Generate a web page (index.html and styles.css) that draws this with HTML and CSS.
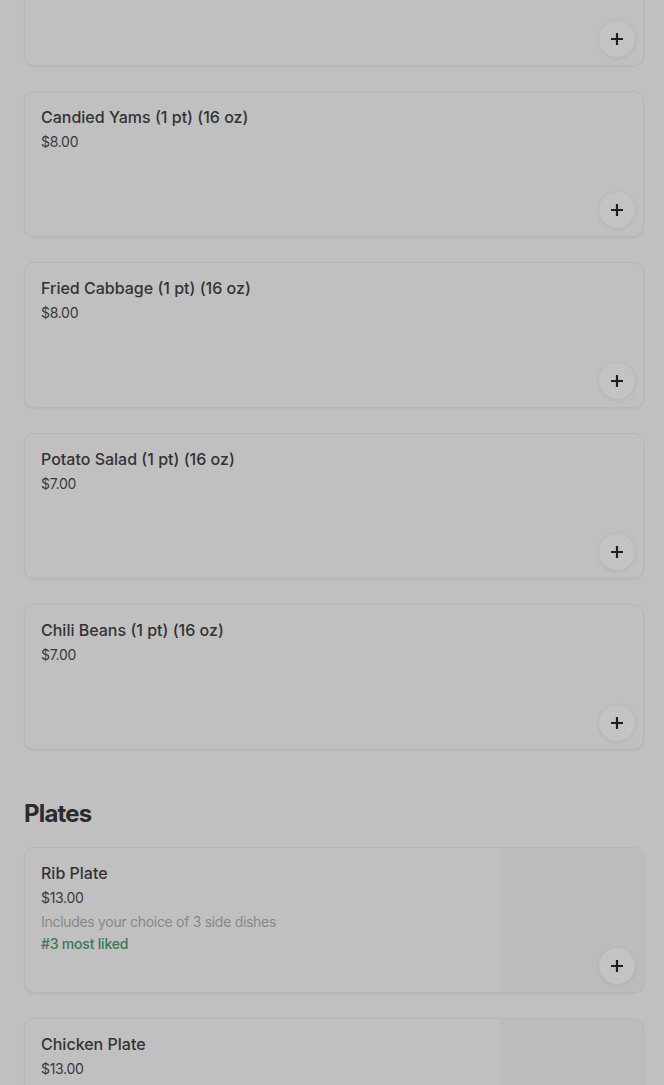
FILE: index.html
```html
<!DOCTYPE html>
<html>
<head>
<meta charset="utf-8">
<link rel="stylesheet" href="styles.css">
</head>
<body>
<div class="page">
  <div class="list list-first">
    <div class="card">
      <div class="info"></div>
      <button class="add"><svg viewBox="0 0 14 14" width="14" height="14"><path d="M7 1v12M1 7h12" stroke="#1f1f1f" stroke-width="2.2"/></svg></button>
    </div>
    <div class="card">
      <div class="info">
        <div class="title">Candied Yams (1 pt) (16 oz)</div>
        <div class="price">$8.00</div>
      </div>
      <button class="add"><svg viewBox="0 0 14 14" width="14" height="14"><path d="M7 1v12M1 7h12" stroke="#1f1f1f" stroke-width="2.2"/></svg></button>
    </div>
    <div class="card">
      <div class="info">
        <div class="title">Fried Cabbage (1 pt) (16 oz)</div>
        <div class="price">$8.00</div>
      </div>
      <button class="add"><svg viewBox="0 0 14 14" width="14" height="14"><path d="M7 1v12M1 7h12" stroke="#1f1f1f" stroke-width="2.2"/></svg></button>
    </div>
    <div class="card">
      <div class="info">
        <div class="title">Potato Salad (1 pt) (16 oz)</div>
        <div class="price">$7.00</div>
      </div>
      <button class="add"><svg viewBox="0 0 14 14" width="14" height="14"><path d="M7 1v12M1 7h12" stroke="#1f1f1f" stroke-width="2.2"/></svg></button>
    </div>
    <div class="card">
      <div class="info">
        <div class="title">Chili Beans (1 pt) (16 oz)</div>
        <div class="price">$7.00</div>
      </div>
      <button class="add"><svg viewBox="0 0 14 14" width="14" height="14"><path d="M7 1v12M1 7h12" stroke="#1f1f1f" stroke-width="2.2"/></svg></button>
    </div>
  </div>

  <h2 class="section-title">Plates</h2>
  <div class="list">
    <div class="card">
      <div class="info">
        <div class="title">Rib Plate</div>
        <div class="price">$13.00</div>
        <div class="desc">Includes your choice of 3 side dishes</div>
        <div class="liked">#3 most liked</div>
      </div>
      <div class="thumb"></div>
      <button class="add"><svg viewBox="0 0 14 14" width="14" height="14"><path d="M7 1v12M1 7h12" stroke="#1f1f1f" stroke-width="2.2"/></svg></button>
    </div>
    <div class="card">
      <div class="info">
        <div class="title">Chicken Plate</div>
        <div class="price">$13.00</div>
        <div class="desc">Includes your choice of 3 side dishes</div>
      </div>
      <div class="thumb"></div>
      <button class="add"><svg viewBox="0 0 14 14" width="14" height="14"><path d="M7 1v12M1 7h12" stroke="#1f1f1f" stroke-width="2.2"/></svg></button>
    </div>
  </div>
</div>
</body>
</html>
```

FILE: styles.css
```css
html, body {
  margin: 0;
  padding: 0;
  background: #c0c0c0;
  overflow: hidden;
}
body {
  font-family: Inter, "Liberation Sans", sans-serif;
  color: #2f2f2f;
}
.page {
  padding: 0 20px 0 24px;
  height: 1085px;
  overflow: hidden;
}
.list {
  display: flex;
  flex-direction: column;
  gap: 25px;
}
.list-first {
  margin-top: -80px;
}
.card {
  position: relative;
  display: flex;
  height: 146px;
  box-sizing: border-box;
  border: 1px solid #b6b6b6;
  border-radius: 10px;
  background: #c0c0c0;
  box-shadow: 0 1px 2px rgba(0,0,0,0.05);
  overflow: hidden;
}
.info {
  flex: 1;
  padding: 15px 16px;
}
.title {
  font-size: 16px;
  font-weight: 500;
  line-height: 20px;
  color: #333333;
  letter-spacing: 0;
}
.price {
  margin-top: 5px;
  font-size: 14px;
  line-height: 20px;
  color: #3a3a3a;
  letter-spacing: -0.3px;
}
.desc {
  margin-top: 4px;
  font-size: 14px;
  line-height: 20px;
  color: #888888;
  letter-spacing: -0.3px;
}
.liked {
  margin-top: 2px;
  font-size: 14px;
  font-weight: 500;
  line-height: 20px;
  color: #3d7657;
  letter-spacing: -0.2px;
}
.thumb {
  width: 143px;
  background: #bcbcbc;
}
.add {
  position: absolute;
  right: 8px;
  bottom: 8px;
  width: 36px;
  height: 36px;
  border-radius: 50%;
  border: none;
  padding: 0;
  background: #c3c3c3;
  box-shadow: 0 1px 4px rgba(0,0,0,0.09);
  display: flex;
  align-items: center;
  justify-content: center;
}
.section-title {
  margin: 48px 0 17px;
  font-size: 24px;
  font-weight: 700;
  line-height: 32px;
  color: #2b2b2b;
  letter-spacing: -0.8px;
}
```
